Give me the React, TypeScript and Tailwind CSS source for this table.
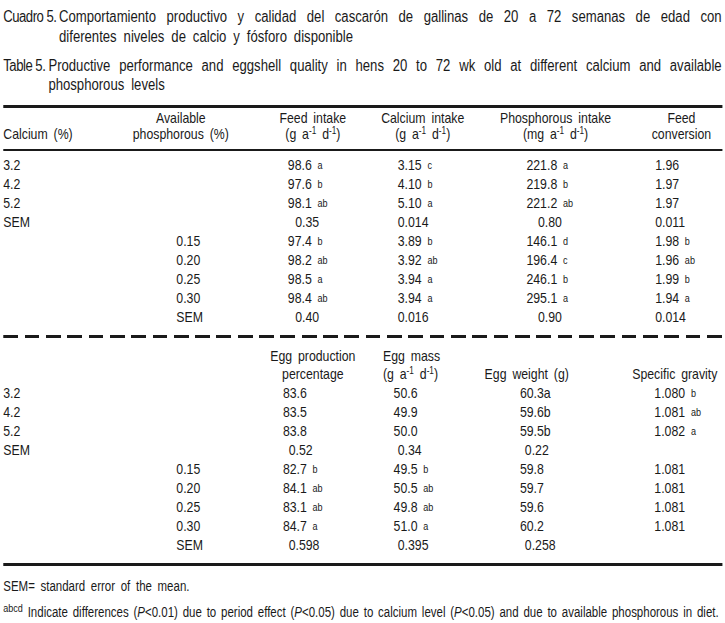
import React from 'react';

type V = [string, string?];

interface TopRow {
  ca: string;
  p: string;
  fi: V;
  ci: V;
  pi: V;
  fc: V;
  sem?: boolean;
}

interface BottomRow {
  ca: string;
  p: string;
  ep: V;
  em: V;
  ew: V;
  sg: V;
  sem?: boolean;
}

const topRows: TopRow[] = [
  { ca: '3.2', p: '', fi: ['98.6', 'a'], ci: ['3.15', 'c'], pi: ['221.8', 'a'], fc: ['1.96'] },
  { ca: '4.2', p: '', fi: ['97.6', 'b'], ci: ['4.10', 'b'], pi: ['219.8', 'b'], fc: ['1.97'] },
  { ca: '5.2', p: '', fi: ['98.1', 'ab'], ci: ['5.10', 'a'], pi: ['221.2', 'ab'], fc: ['1.97'] },
  { ca: 'SEM', p: '', fi: ['0.35'], ci: ['0.014'], pi: ['0.80'], fc: ['0.011'], sem: true },
  { ca: '', p: '0.15', fi: ['97.4', 'b'], ci: ['3.89', 'b'], pi: ['146.1', 'd'], fc: ['1.98', 'b'] },
  { ca: '', p: '0.20', fi: ['98.2', 'ab'], ci: ['3.92', 'ab'], pi: ['196.4', 'c'], fc: ['1.96', 'ab'] },
  { ca: '', p: '0.25', fi: ['98.5', 'a'], ci: ['3.94', 'a'], pi: ['246.1', 'b'], fc: ['1.99', 'b'] },
  { ca: '', p: '0.30', fi: ['98.4', 'ab'], ci: ['3.94', 'a'], pi: ['295.1', 'a'], fc: ['1.94', 'a'] },
  { ca: '', p: 'SEM', fi: ['0.40'], ci: ['0.016'], pi: ['0.90'], fc: ['0.014'], sem: true },
];

const bottomRows: BottomRow[] = [
  { ca: '3.2', p: '', ep: ['83.6'], em: ['50.6'], ew: ['60.3a'], sg: ['1.080', 'b'] },
  { ca: '4.2', p: '', ep: ['83.5'], em: ['49.9'], ew: ['59.6b'], sg: ['1.081', 'ab'] },
  { ca: '5.2', p: '', ep: ['83.8'], em: ['50.0'], ew: ['59.5b'], sg: ['1.082', 'a'] },
  { ca: 'SEM', p: '', ep: ['0.52'], em: ['0.34'], ew: ['0.22'], sg: [''], sem: true },
  { ca: '', p: '0.15', ep: ['82.7', 'b'], em: ['49.5', 'b'], ew: ['59.8'], sg: ['1.081'] },
  { ca: '', p: '0.20', ep: ['84.1', 'ab'], em: ['50.5', 'ab'], ew: ['59.7'], sg: ['1.081'] },
  { ca: '', p: '0.25', ep: ['83.1', 'ab'], em: ['49.8', 'ab'], ew: ['59.6'], sg: ['1.081'] },
  { ca: '', p: '0.30', ep: ['84.7', 'a'], em: ['51.0', 'a'], ew: ['60.2'], sg: ['1.081'] },
  { ca: '', p: 'SEM', ep: ['0.598'], em: ['0.395'], ew: ['0.258'], sg: [''], sem: true },
];

const Val = ({ v }: { v: V }) => (
  <span className="whitespace-nowrap">
    {v[0]}
    {v[1] && <sup className="ml-[7px] text-[11px] relative -top-[1px]">{v[1]}</sup>}
  </span>
);

const Unit = ({ u = 'g' }: { u?: string }) => (
  <span>
    ({u} a<sup className="text-[10px] leading-none">-1</sup> d<sup className="text-[10px] leading-none">-1</sup>)
  </span>
);

// Narrow-face look: Liberation Sans compressed horizontally like Arial Narrow
export default function App() {
  return (
    <div className="w-[725px] h-[623px] bg-white overflow-hidden">
      <div
        className="w-[884px] origin-top-left scale-x-[0.82] text-[#1a1a1a] px-[4px] pt-[7px] [word-spacing:3px]"
        style={{ fontFamily: '"Liberation Sans", Arial, sans-serif' }}
      >
        {/* captions */}
        <div className="flex text-[16px] leading-[20px] [word-spacing:4px]">
          <span className="w-[68px] shrink-0 whitespace-nowrap tracking-[-0.6px] [word-spacing:0px]">Cuadro 5.</span>
          <p className="flex-1 text-justify">
            Comportamiento productivo y calidad del cascarón de gallinas de 20 a 72 semanas de edad con diferentes
            niveles de calcio y fósforo disponible
          </p>
        </div>
        <div className="flex text-[16px] leading-[19px] mt-[9px] [word-spacing:4px]">
          <span className="w-[55px] shrink-0 whitespace-nowrap tracking-[-0.6px] [word-spacing:0px]">Table 5.</span>
          <p className="flex-1 text-justify">
            Productive performance and eggshell quality in hens 20 to 72 wk old at different calcium and available
            phosphorous levels
          </p>
        </div>

        {/* table */}
        <div className="mt-[11px] text-[15px] w-[877px]">
          <div className="h-[3px] bg-[#1a1a1a]" />
          <div className="flex items-end leading-[16px] pt-[2px] pb-[7px]">
            <div className="w-[131px]">Calcium (%)</div>
            <div className="w-[171px] text-center">Available<br />phosphorous (%)</div>
            <div className="w-[151px] text-center">Feed intake<br /><Unit /></div>
            <div className="w-[117px] text-center">Calcium intake<br /><Unit /></div>
            <div className="w-[207px] text-center">Phosphorous intake<br /><Unit u="mg" /></div>
            <div className="w-[100px] text-center">Feed<br />conversion</div>
          </div>
          <div className="h-[2px] bg-[#1a1a1a]" />
          <div className="pt-[5px] pb-[8px]">
            {topRows.map((r, i) => (
              <div key={i} className="flex h-[19px] items-center">
                <div className="w-[131px]">{r.ca}</div>
                <div className="w-[171px] pl-[80px]">{r.p}</div>
                <div className={`w-[151px] ${r.sem ? 'pl-[54px]' : 'pl-[45px]'}`}><Val v={r.fi} /></div>
                <div className="w-[117px] pl-[28px]"><Val v={r.ci} /></div>
                <div className={`w-[207px] ${r.sem ? 'pl-[82px]' : 'pl-[68px]'}`}><Val v={r.pi} /></div>
                <div className="w-[100px] pl-[18px]"><Val v={r.fc} /></div>
              </div>
            ))}
          </div>
          <div className="h-[3px] bg-[repeating-linear-gradient(90deg,#1a1a1a_0_18px,transparent_18px_26px)]" />
          <div className="flex items-end leading-[18px] pt-[9px]">
            <div className="w-[131px]" />
            <div className="w-[171px]" />
            <div className="w-[151px] text-center">Egg production<br />percentage</div>
            <div className="w-[117px] pl-[10px] whitespace-nowrap">Egg mass<br /><Unit /></div>
            <div className="w-[207px] pl-[17px]">Egg weight (g)</div>
            <div className="w-[100px] whitespace-nowrap -ml-[10px]">Specific gravity</div>
          </div>
          <div className="pt-[1px] pb-[8px]">
            {bottomRows.map((r, i) => (
              <div key={i} className="flex h-[19px] items-center">
                <div className="w-[131px]">{r.ca}</div>
                <div className="w-[171px] pl-[80px]">{r.p}</div>
                <div className={`w-[151px] ${r.sem ? 'pl-[46px]' : 'pl-[39px]'}`}><Val v={r.ep} /></div>
                <div className={`w-[117px] ${r.sem ? 'pl-[28px]' : 'pl-[23px]'}`}><Val v={r.em} /></div>
                <div className={`w-[207px] ${r.sem ? 'pl-[66px]' : 'pl-[60px]'}`}><Val v={r.ew} /></div>
                <div className="w-[100px] pl-[17px]"><Val v={r.sg} /></div>
              </div>
            ))}
          </div>
          <div className="h-[3px] bg-[#1a1a1a]" />
        </div>

        {/* notes */}
        <div className="text-[14px] leading-[16px] mt-[12px]">SEM= standard error of the mean.</div>
        <div className="text-[14px] leading-[16px] mt-[10px] whitespace-nowrap [word-spacing:2px]">
          <sup className="text-[11px]">abcd</sup> Indicate differences (<i>P</i>&lt;0.01) due to period effect (<i>P</i>&lt;0.05) due to
          calcium level (<i>P</i>&lt;0.05) and due to available phosphorous in diet.
        </div>
      </div>
    </div>
  );
}
